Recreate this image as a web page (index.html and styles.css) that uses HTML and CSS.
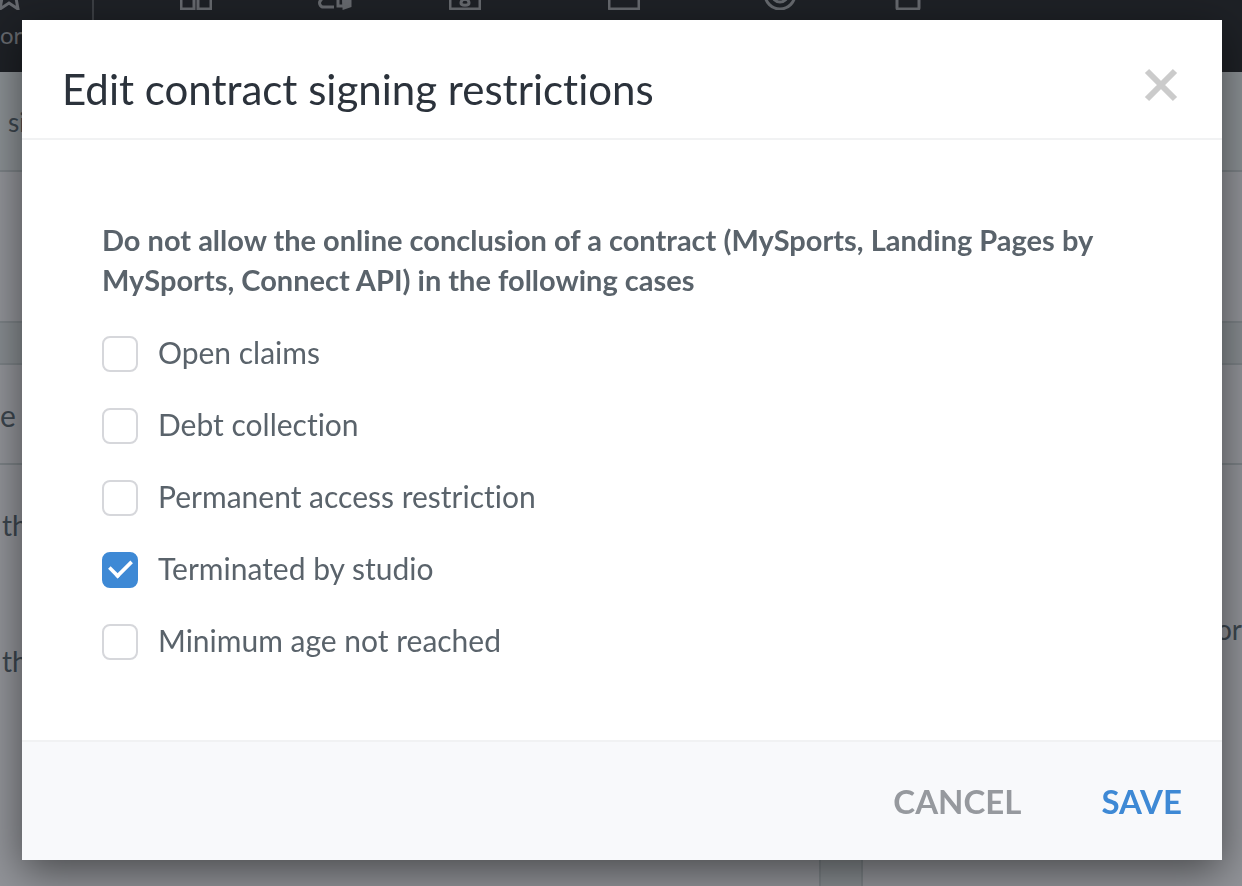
FILE: index.html
```html
<!DOCTYPE html>
<html lang="en">
  <head>
    <meta charset="UTF-8" />
    <meta name="viewport" content="width=device-width, initial-scale=1" />
    <title>Edit contract signing restrictions</title>
    <link rel="stylesheet" href="styles.css">
  </head>

  <body>
    <div class="page">
      <nav class="toolbar">
        <div class="favorites">
          <svg width="34" height="32" viewBox="0 0 34 32"><path d="M17 2l4 10 11 1-8 7 2 11-9-6-9 6 2-11-8-7 11-1z" /></svg>
          <span>ori</span>
        </div>
        <div class="tools">
          <svg width="32" height="32" viewBox="0 0 32 32"><path d="M1 2h13v29H1zM18 2h13v29H18z" /></svg>
          <svg width="34" height="32" viewBox="0 0 34 32"><path d="M16 29H6a4 4 0 0 1-3-7l4-6M20 10v18h6V10" /><path class="solid" d="M25 10h7v18l-6 2z" /></svg>
          <svg width="32" height="32" viewBox="0 0 32 32"><rect x="1" y="4" width="30" height="27" rx="1" /><circle cx="16" cy="18" r="3" /><path d="M12 25c0-5 8-5 8 0 0 3-8 3-8 0z" /></svg>
          <svg width="32" height="32" viewBox="0 0 32 32"><rect x="1" y="6" width="30" height="25" rx="1" /></svg>
          <svg width="32" height="32" viewBox="0 0 32 32"><circle cx="16" cy="16" r="15" /><circle cx="16" cy="16" r="8" /></svg>
          <svg width="32" height="32" viewBox="0 0 32 32"><rect x="5" y="2" width="22" height="29" rx="1" /></svg>
        </div>
      </nav>

      <section class="panel">
        <h2 class="panel-head small">si</h2>
        <div class="panel-body"></div>
      </section>

      <div class="columns">
        <section class="panel">
          <h2 class="panel-head">e</h2>
          <p class="setting">th</p>
          <p class="setting">th</p>
        </section>
        <section class="panel">
          <h2 class="panel-head"></h2>
          <p class="hint">or</p>
        </section>
      </div>
    </div>

    <div class="overlay">
      <form class="modal" role="dialog" aria-labelledby="modal-title">
        <header class="modal-header">
          <h1 id="modal-title">Edit contract signing restrictions</h1>
          <button type="button" class="close" aria-label="Close">
            <svg width="34" height="34" viewBox="0 0 34 34"><path d="M3 3l28 28M31 3L3 31" /></svg>
          </button>
        </header>

        <fieldset class="modal-body">
          <legend>Do not allow the online conclusion of a contract (MySports, Landing Pages by MySports, Connect API) in the following cases</legend>
          <label class="option"><input type="checkbox" name="claims" />Open claims</label>
          <label class="option"><input type="checkbox" name="debt" />Debt collection</label>
          <label class="option"><input type="checkbox" name="access" />Permanent access restriction</label>
          <label class="option"><input type="checkbox" name="terminated" checked />Terminated by studio</label>
          <label class="option"><input type="checkbox" name="age" />Minimum age not reached</label>
        </fieldset>

        <footer class="modal-footer">
          <button type="button" class="cancel">CANCEL</button>
          <button type="submit" class="save">SAVE</button>
        </footer>
      </form>
    </div>
  </body>
</html>
```
FILE: styles.css
```css
* {
  box-sizing: border-box;
}

body {
  margin: 0;
  overflow: hidden;
  font-family: Lato, "Open Sans", sans-serif;
  font-variant-ligatures: none;
  color: #5a636b;
}

h1,
h2,
p {
  margin: 0;
  font-weight: 400;
}

button {
  border: 0;
  padding: 0;
  background: none;
  font-family: inherit;
  cursor: pointer;
}

/* page behind the dialog */
.page {
  display: flex;
  flex-direction: column;
  height: 100vh;
  background: #878c90;
  color: #3c464e;
}

.toolbar {
  display: flex;
  flex-shrink: 0;
  height: 94px;
  margin-top: -22px;
  background: #1e2126;
  color: #66696e;
  font-size: 24px;
}

.toolbar svg {
  display: block;
  fill: none;
  stroke: currentColor;
  stroke-width: 3;
}

.toolbar .solid {
  fill: currentColor;
}

.favorites {
  width: 94px;
  border-right: 2px solid #3c3f44;
}

.favorites svg {
  margin: 0 0 10px -8px;
}

.favorites span {
  display: block;
}

.tools {
  display: grid;
  grid-template-columns: 138px 131px 159px 156px 128px 32px;
  padding-left: 86px;
}

.panel {
  background: #929499;
  border-bottom: 2px solid #7c8286;
}

.panel-head {
  height: 100px;
  padding: 32px 0;
  border-bottom: 2px solid #7c8286;
  font-size: 30px;
  line-height: 36px;
}

.panel-head.small {
  padding-left: 8px;
  background: #8b9094;
  font-size: 26px;
}

.panel-body {
  height: 149px;
}

.columns {
  flex: 1;
  display: grid;
  grid-template-columns: 821px 1fr;
  gap: 40px;
  padding-top: 40px;
}

.columns .panel {
  border: 2px solid #7c8286;
  border-width: 2px 2px 0 0;
}

.columns .panel + .panel {
  border-width: 2px 0 0 2px;
}

.columns .setting {
  padding: 42px 0 58px 2px;
  font-size: 28px;
  line-height: 36px;
}

.columns .hint {
  padding-top: 146px;
  text-align: right;
  font-size: 28px;
  line-height: 36px;
}

/* dialog */
.overlay {
  position: fixed;
  inset: 0;
  padding: 20px 20px 20px 22px;
}

.modal {
  max-width: 1200px;
  margin: 0 auto;
  background: #fff;
  box-shadow: 0 12px 40px rgba(0, 0, 0, 0.5);
}

.modal-header {
  display: flex;
  justify-content: space-between;
  align-items: center;
  height: 120px;
  padding: 20px 44px 0 40px;
  border-bottom: 2px solid #f1f2f3;
}

.modal-header h1 {
  color: #2b323b;
  font-size: 42px;
  line-height: 52px;
}

.close svg {
  display: block;
  margin-bottom: 8px;
  stroke: #cbcbcb;
  stroke-width: 6;
}

.modal-body {
  display: flex;
  flex-direction: column;
  gap: 36px;
  margin: 0;
  padding: 80px;
  border: 0;
}

.modal-body legend {
  float: left;
  padding: 0;
  font-size: 29px;
  font-weight: 700;
  line-height: 40px;
}

.option {
  display: flex;
  gap: 20px;
  height: 36px;
  font-size: 30px;
  line-height: 32px;
}

.option input {
  appearance: none;
  display: grid;
  place-items: center;
  width: 36px;
  height: 36px;
  margin: 0;
  border: 2px solid #d6d7db;
  border-radius: 8px;
  background: #fff;
}

.option input:checked {
  border-color: #3e89d5;
  background: #3e89d5;
}

.option input:checked::before {
  content: "";
  width: 11px;
  height: 20px;
  margin-bottom: 8px;
  border: solid #fff;
  border-width: 0 4px 4px 0;
  transform: rotate(45deg) scale(0.9);
}

.modal-footer {
  display: flex;
  justify-content: flex-end;
  align-items: center;
  gap: 80px;
  height: 120px;
  padding: 0 40px;
  border-top: 2px solid #f1f2f3;
  background: #f8f9fb;
}

.modal-footer button {
  font-size: 33px;
  font-weight: 700;
  line-height: 40px;
}

.cancel {
  color: #96999e;
}

.save {
  color: #3e89d5;
}
```
